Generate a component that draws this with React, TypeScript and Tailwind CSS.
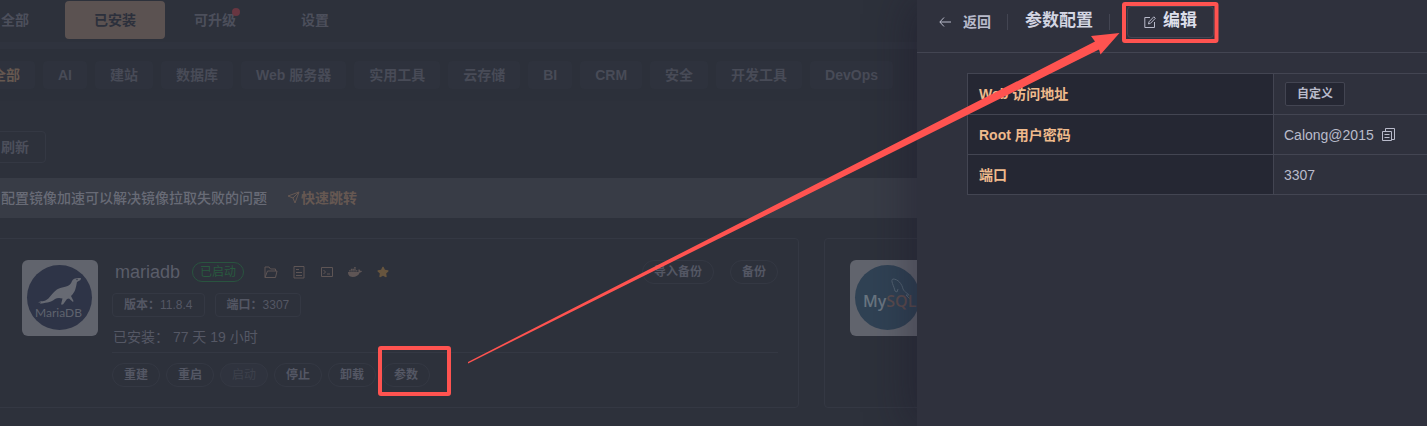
import type { ReactNode } from "react";
import { FaDocker, FaStar } from "react-icons/fa";

const categories = ["AI", "建站", "数据库", "Web 服务器", "实用工具", "云存储", "BI", "CRM", "安全", "开发工具", "DevOps"];

function MariaLogo() {
  return (
    <svg viewBox="0 0 76 76" className="size-[76px] shrink-0 rounded-md bg-[#61646d]" role="img" aria-label="MariaDB">
      <circle cx="37.5" cy="37.5" r="32.5" fill="#2e3447" />
      <path
        d="M16 42.5 C19 40.5 22 42 25 39.5 C29 37 31 31 37 28.500 C43 26.500 48 27 50 21 C51 18.500 54 17.500 59 18 L58.500 20 L55 22 C54 27 53.500 32 49 36 L51.500 41 L51 42 L47 38.500 L45 39 L41 44.500 L39 44.500 L40.500 38.500 C37 37.500 35 38 33 39 C29 43 22 42.500 18 44 L19 42.500 Z"
        fill="#676a73"
      />
      <circle cx="55" cy="19.500" r="0.700" fill="#2e3447" />
      <text x="13" y="57" fontSize="12" fill="#5f636e" fontFamily="Lato, sans-serif">MariaDB</text>
    </svg>
  );
}

function MySqlLogo() {
  return (
    <svg viewBox="0 0 76 76" className="size-[76px] shrink-0 rounded-md bg-[#61646d]" role="img" aria-label="MySQL">
      <circle cx="37.5" cy="37.5" r="32.5" fill="#304254" />
      <path
        d="M45 31 C44 26 40 20 43 19 C48 19 52 24 53 29 C55 33 58 33 59 35 L56 35 L60 39 M45 31 L47 32 L48 29"
        fill="none" stroke="#536372" strokeWidth="1"
      />
      <text x="13" y="47" fontSize="16" fontWeight="600" fill="#697580" fontFamily="'Open Sans', sans-serif">
        My<tspan fill="#5b4c4e">SQL</tspan>
      </text>
    </svg>
  );
}

function LineIcon({ children, label }: { children: ReactNode; label: string }) {
  return (
    <button aria-label={label} className="text-[#5e5555]">
      <svg viewBox="0 0 14 14" className="size-3.5" fill="none" stroke="currentColor">{children}</svg>
    </button>
  );
}

function Pill({ children, disabled }: { children: ReactNode; disabled?: boolean }) {
  return (
    <button
      disabled={disabled}
      className="h-6 rounded-full border border-[#343843] px-[11px] text-xs font-bold text-[#545764] disabled:bg-[#2f333e] disabled:font-normal disabled:text-[#3d414c]"
    >
      {children}
    </button>
  );
}

function Tag({ name, value }: { name: string; value: string }) {
  return (
    <span className="flex h-6 items-center rounded-sm border border-[#343843] px-[11px] text-xs text-[#545764]">
      <b>{name}：</b>{value}
    </span>
  );
}

const card = "h-[170px] rounded-sm border border-[#343843] pr-5 pl-[25px] pt-[21px]";

function Store() {
  return (
    <main className="min-h-screen bg-[#2d313b] text-sm text-[#4c4f5b]">
      <nav className="-ml-[35px] flex pt-px font-bold">
        <button className="h-[38px] w-[100px]">全部</button>
        <button className="h-[38px] w-[100px] rounded-sm bg-[#5b5251] text-[#2c303c]">已安装</button>
        <button className="h-[38px] w-[100px]">
          <span className="relative">
            可升级
            <i className="absolute -top-1 -right-1 size-2 rounded-full bg-[#683641]" />
          </span>
        </button>
        <button className="h-[38px] w-[100px]">设置</button>
      </nav>
      <div className="mt-[3px] border-t-[7px] border-[#2f333e] bg-[#2c303a] py-3">
        <div className="-ml-[23px] flex gap-2 whitespace-nowrap font-bold">
          <button className="h-7 rounded-sm bg-[#2e323d] px-[15px] text-[#665850]">全部</button>
          {categories.map((name) => (
            <button key={name} className="h-7 rounded-sm bg-[#2e323d] px-[15px] text-[#484b57]">{name}</button>
          ))}
        </div>
      </div>
      <div className="-ml-4 pt-[30px]">
        <button className="h-8 rounded-sm border border-[#343843] px-4 font-bold text-[#4c4f5b]">刷新</button>
      </div>
      <div className="mt-[15px] flex h-10 items-center bg-[#383c46] pl-px font-medium text-[#686b76]">
        <span>配置镜像加速可以解决镜像拉取失败的问题</span>
        <a href="#mirror" className="ml-5 flex items-center font-bold text-[#665852]">
          <svg viewBox="0 0 14 14" className="size-3.5" fill="none" stroke="currentColor">
            <path d="M12 1 L1 5 L6 7 L8 12 Z M6 7 L12 1" strokeLinejoin="round" />
          </svg>
          快速跳转
        </a>
      </div>
      <div className="mt-5 -ml-1 grid grid-cols-[803px_803px] gap-[25px] overflow-hidden">
        <section className={card}>
          <div className="flex gap-[14px]">
            <MariaLogo />
            <div className="flex-1">
              <div className="flex h-6 items-center">
                <h2 className="ml-[3px] text-lg font-medium text-[#5a5d69]">mariadb</h2>
                <span className="ml-3 flex h-5 items-center rounded-full border border-[#29543f] px-[7px] text-xs text-[#295a3f]">已启动</span>
                <div className="ml-5 flex items-center gap-3.5">
                  <LineIcon label="目录">
                    <path d="M1 12.5 V2 H5 L6.5 4 H11.5 V6 M1 12.5 L3.5 6 H13 L11.5 12.5 Z" />
                  </LineIcon>
                  <LineIcon label="日志">
                    <path d="M2 1.5 H12 V13 H2 Z M4 4.5 H7 M4 7.5 H10 M4 10.5 H10" />
                  </LineIcon>
                  <LineIcon label="终端">
                    <path d="M1.5 2.5 H12.5 V11.5 H1.5 Z M3.5 5 L5.5 7 L3.5 9 M7 9 H10" />
                  </LineIcon>
                  <button aria-label="容器"><FaDocker className="size-3.5 text-[#5e5555]" /></button>
                  <button aria-label="收藏" className="px-px"><FaStar className="size-3 text-[#67553e]" /></button>
                </div>
                <div className="ml-auto flex gap-4">
                  <Pill>导入备份</Pill>
                  <Pill>备份</Pill>
                </div>
              </div>
              <div className="mt-[9px] flex gap-2.5">
                <Tag name="版本" value="11.8.4" />
                <Tag name="端口" value="3307" />
              </div>
              <p className="mt-2.5 pl-px leading-5 text-[#555865]">已安装： 77 天 19 小时</p>
              <div className="mt-[5px] flex gap-1.5 border-t border-[#343843] pt-2.5">
                <Pill>重建</Pill>
                <Pill>重启</Pill>
                <Pill disabled>启动</Pill>
                <Pill>停止</Pill>
                <Pill>卸载</Pill>
                <Pill>参数</Pill>
              </div>
            </div>
          </div>
        </section>
        <section className={card}>
          <MySqlLogo />
        </section>
      </div>
    </main>
  );
}

function ParamsDrawer() {
  const head = "border border-[#434552] bg-[#252733] px-[11px] text-left font-bold text-[#efba8c]";
  const cell = "border border-[#434552] px-2.5";
  return (
    <aside className="absolute inset-y-0 right-0 w-[510px] overflow-hidden bg-[#2f313d] text-sm text-[#b9bbcb] shadow-[-8px_0_40px_rgba(25,20,40,0.4)]">
      <header className="flex h-[53px] items-center border-b border-[#434552] pb-[9px] pl-[22px]">
        <button className="flex items-center gap-3 font-bold">
          <svg viewBox="0 0 12 12" className="size-3" fill="none" stroke="currentColor">
            <path d="M5 1.5 L0.8 6 L5 10.5 M1 6 H12" />
          </svg>
          返回
        </button>
        <span className="ml-4 h-4 w-px bg-[#434552]" />
        <h1 className="ml-[17px] text-[17px] font-bold text-[#d3d5e2]">参数配置</h1>
        <span className="ml-4 h-4 w-px bg-[#434552]" />
        <button className="ml-[17px] flex h-8 items-center gap-[7px] rounded-sm border border-[#434552] px-4 text-[17px] font-bold text-[#dcdeea]">
          <svg viewBox="0 0 12 12" className="size-3" fill="none" stroke="#b9bbcb">
            <path d="M6 1.5 H0.8 V11.5 H10.5 V6 M4.5 8 L5 5.8 L9.8 0.8 L11.3 2.3 L6.5 7.3 Z" />
          </svg>
          编辑
        </button>
      </header>
      <table className="mt-5 ml-[50px] w-[520px] table-fixed border-collapse">
        <tbody>
          <tr className="h-[41px]">
            <th scope="row" className={head + " w-[306px]"}>Web 访问地址</th>
            <td className={cell}>
              <button className="ml-px block h-6 rounded-xs border border-[#434552] bg-[#252733] px-[11px] text-xs font-bold">自定义</button>
            </td>
          </tr>
          <tr className="h-10">
            <th scope="row" className={head}>Root 用户密码</th>
            <td className={cell}>
              <span className="flex items-center gap-2">
                Calong@2015
                <button aria-label="复制">
                  <svg viewBox="0 0 13 13" className="block size-[13px]" fill="none" stroke="currentColor">
                    <path d="M0.5 3.5 H9.5 V12.5 H0.5 Z M3.5 3 V0.5 H12.5 V11.5 H10 M2.5 6.5 H7.5 M2.5 9.5 H7.5" />
                  </svg>
                </button>
              </span>
            </td>
          </tr>
          <tr className="h-10">
            <th scope="row" className={head}>端口</th>
            <td className={cell}>3307</td>
          </tr>
        </tbody>
      </table>
    </aside>
  );
}

export default function App() {
  return (
    <div className="relative overflow-hidden font-['Liberation_Sans','Noto_Sans_CJK_SC',sans-serif]">
      <Store />
      <ParamsDrawer />
      <svg className="pointer-events-none absolute top-0 right-0 h-[426px] w-[1427px]" viewBox="0 0 1427 426" fill="none" aria-hidden="true">
        <rect x="380" y="348" width="69" height="46" rx="1" stroke="#ff5350" strokeWidth="4" />
        <rect x="1124" y="4" width="92.500" height="37" rx="1" stroke="#ff5350" strokeWidth="4" />
        <path d="M468 362 L1095 41.500 L1091 36 L1119.500 33 L1100.500 54.500 L1099 49.500 L468 363.500 Z" fill="#ff5350" />
      </svg>
    </div>
  );
}
